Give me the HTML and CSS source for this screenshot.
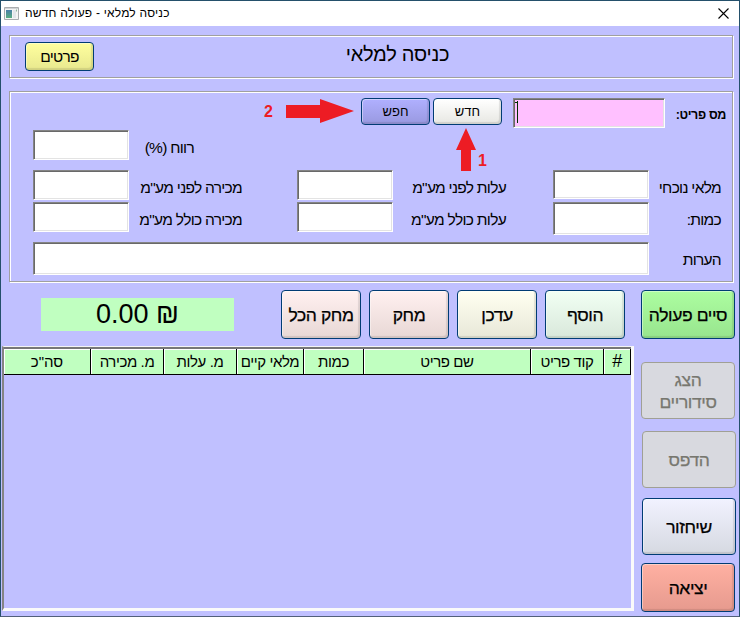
FILE: index.html
```html
<!DOCTYPE html>
<html lang="he" dir="rtl">
<head>
<meta charset="utf-8">
<title>כניסה למלאי - פעולה חדשה</title>
<link rel="stylesheet" href="styles.css">
</head>
<body>
<div class="window">
  <header class="titlebar">
    <svg class="close" width="11" height="11" viewBox="0 0 11 11"><path d="M.5 .5l10 10M10.5 .5l-10 10" stroke="#000" stroke-width="1.1" fill="none"/></svg>
    <span class="caption"><span class="caption-text">כניסה למלאי - פעולה חדשה</span>
      <svg class="app-icon" width="15" height="13" viewBox="0 0 15 13"><defs><linearGradient id="g" x1="0" y1="0" x2="0" y2="1"><stop offset="0" stop-color="#4a7fa8"/><stop offset="1" stop-color="#58ad80"/></linearGradient></defs><path d="M.5 .5h14v12H.5z" fill="#f4f4f4" stroke="#a9acae"/><path d="M1 1h13v1H1z" fill="#d0d2d4"/><path d="M2 3h6v8H2z" fill="url(#g)"/><path d="M9 3h3v8H9z" fill="#e2e6ea"/><path d="M12 2.5h1v2h-1z" fill="#8fb79c"/></svg>
    </span>
  </header>

  <section class="group heading">
    <h1>כניסה למלאי</h1>
    <button class="btn yellow">פרטים</button>
  </section>

  <section class="group form">
    <div class="item-row">
      <label class="item-label">מס פריט:</label>
      <div class="field item-field"><svg width="4" height="24" viewBox="0 0 4 24"><path d="M3 1h1v22H3zM1 2h2v1H1z" fill="#003000"/></svg></div>
      <button class="btn small white">חדש</button>
      <button class="btn small blue">חפש</button>
      <svg class="arrow-right" width="68" height="24" viewBox="0 0 68 24"><path d="M0 6h34V0l34 12-34 12v-5H0z" fill="#ed1c24"/></svg>
      <span class="num two">2</span>
    </div>
    <div class="fields">
      <label class="c7 r1 profit">רווח (%)</label><div class="field c8 r1"></div>
      <label class="c1 r2">מלאי נוכחי</label><div class="field c2 r2 short"></div>
      <label class="c4 r2">עלות לפני מע"מ</label><div class="field c5 r2"></div>
      <label class="c7 r2">מכירה לפני מע"מ</label><div class="field c8 r2"></div>
      <label class="c1 r3">כמות:</label><div class="field c2 r3 tall"></div>
      <label class="c4 r3">עלות כולל מע"מ</label><div class="field c5 r3"></div>
      <label class="c7 r3">מכירה כולל מע"מ</label><div class="field c8 r3"></div>
      <label class="c1 r4">הערות</label><div class="field notes r4"></div>
    </div>
    <div class="pointer">
      <svg width="20" height="43" viewBox="0 0 20 43"><path d="M10 0l10 22h-5v21H5V22H0z" fill="#ed1c24"/></svg>
      <span class="num">1</span>
    </div>
  </section>

  <div class="toolbar">
    <button class="btn green finish">סיים פעולה</button>
    <button class="btn mint">הוסף</button>
    <button class="btn cream">עדכן</button>
    <button class="btn rose">מחק</button>
    <button class="btn rose">מחק הכל</button>
    <div class="total" dir="ltr">0.00 ₪</div>
  </div>

  <main class="lower">
    <aside class="side">
      <button class="btn off b1" disabled>הצג<br>סידוריים</button>
      <button class="btn off b2" disabled>הדפס</button>
      <button class="btn ice b3">שיחזור</button>
      <button class="btn red b4">יציאה</button>
    </aside>
    <div class="list">
      <div class="head">
        <span class="hash">#</span><span>קוד פריט</span><span>שם פריט</span><span>כמות</span><span>מלאי קיים</span><span>מ. עלות</span><span>מ. מכירה</span><span class="sum">סה"כ</span>
      </div>
    </div>
  </main>
</div>
</body>
</html>
```
FILE: styles.css
```css
* { box-sizing: border-box; }
body { margin: 0; font-family: "Liberation Sans", sans-serif; color: #000; }
.window { width: 740px; height: 617px; overflow: hidden; background: #c0c0ff; border: 1px solid #24506b; border-bottom-color: #52607a; }

.titlebar { height: 25px; background: #fff; display: flex; align-items: center; justify-content: space-between; padding: 0 10px 1px 3px; }
.caption { display: flex; align-items: center; gap: 6px; font-size: 12px; letter-spacing: .2px; white-space: nowrap; }
svg { display: block; flex: none; }

.group { width: 724px; margin-right: 6px; border: 1px solid #a0a0a0; box-shadow: 1px 1px 0 #fff, inset 1px 1px 0 #fff; }
.heading { margin-top: 9px; height: 43px; display: grid; grid-template-columns: 1fr 69px; padding: 6px 0 0 15px; }
h1 { margin: 0; font-size: 20px; font-weight: 400; line-height: 24px; letter-spacing: -.25px; text-align: center; padding-right: 31px; }

.btn { font-family: inherit; color: #000; padding: 0; border: 1px solid #003c74; border-radius: 4px; font-size: 17.5px; letter-spacing: -.4px; line-height: 22px; white-space: nowrap; box-shadow: inset 1px 1px 0 rgba(255,255,255,.4), inset -2px -2px 1px rgba(0,0,0,.1); -webkit-text-stroke: .25px; }
.yellow { background: linear-gradient(#ffff9e, #e8e88e); height: 29px; font-size: 15.5px; letter-spacing: -.7px; -webkit-text-stroke: 0; }
.small { width: 69px; height: 27px; font-size: 13px; letter-spacing: 0; -webkit-text-stroke: 0; }
.white { background: linear-gradient(#fff, #e7e7e2); margin-right: 11px; }
.blue { background: linear-gradient(#b0b0ff, #9999e0); margin-right: 3px; }
.green { background: linear-gradient(#acfda0, #98e58e); }
.mint { background: linear-gradient(#f1fff3, #d9e8db); }
.cream { background: linear-gradient(#fffff1, #e8e8d8); }
.rose { background: linear-gradient(#fff0f0, #e8d8d5); }
.ice { background: linear-gradient(#f1f2ff, #d6d9e1); }
.red { background: linear-gradient(#ffb0a2, #e69a8e); }
.off { background: #d8d9df; border-color: #a0a095; color: #77776f; box-shadow: none; }

.form { margin-top: 13px; height: 191px; position: relative; }
.item-row { display: flex; align-items: flex-start; padding: 6px 6px 0 0; height: 38px; }
.item-label { width: 61px; font-size: 12.5px; font-weight: 700; letter-spacing: -.35px; line-height: 34px; white-space: nowrap; }
.field { background: #fff; border: 1px solid; border-color: #848484 #fff #fff #848484; box-shadow: inset 1px 1px 0 #696969, inset -1px -1px 0 #e3e3e3; height: 30px; }
.item-field { width: 152px; background: #ffc0ff; padding: 1px 0 0; direction: ltr; }
.arrow-right { margin: 1px 7px 0 0; }
.num { color: #ed1c24; font-size: 16px; font-weight: 700; }
.two { margin: 5px 13px 0 0; line-height: 18px; }
.pointer { position: absolute; left: 446px; top: 36px; display: flex; direction: ltr; align-items: flex-end; gap: 2px; line-height: 20px; }

.fields { display: grid; grid-template-columns: 72px 96px 47px 113px 96px 55px 113px 96px; grid-template-rows: 40px 32px 40px 33px; padding-right: 11px; }
.fields label { font-size: 15.5px; letter-spacing: -.7px; line-height: 35px; white-space: nowrap; }
.fields .profit { padding-right: 48px; }
.c1 { grid-column: 1; } .c2 { grid-column: 2; } .c4 { grid-column: 4; } .c5 { grid-column: 5; }
.c7 { grid-column: 7; } .c8 { grid-column: 8; }
.r1 { grid-row: 1; } .r2 { grid-row: 2; } .r3 { grid-row: 3; } .r4 { grid-row: 4; }
.short { height: 29px; } .tall { height: 33px; }
.notes { grid-column: 2 / 9; height: 33px; }

.toolbar { display: flex; margin-top: 8px; padding-right: 4px; gap: 8px; height: 56px; }
.toolbar .btn { width: 80px; height: 49px; }
.toolbar .finish { width: 94px; margin-left: 8px; }
.total { width: 193px; height: 33px; margin: 8px 39px 0 0; background: #c0ffc0; font-size: 27px; line-height: 33px; text-align: center; }

.lower { display: flex; justify-content: space-between; }
.side { width: 95px; margin-right: 3px; display: flex; flex-direction: column; padding-top: 16px; }
.side .btn { width: 94px; height: 57px; }
.b1 { margin-right: 1px; } .b2 { margin-top: 12px; } .b3 { margin-top: 10px; }
.side .b4 { margin: 8px 1px 0 0; height: 49px; }
.list { width: 632px; height: 265px; margin-left: 1px; border: solid; border-width: 1px 3px 3px 2px; border-color: #f4f4f4 #fafafa #fafafa #848484; box-shadow: inset 0 2px 0 #777; padding-top: 2px; }
.head { display: grid; grid-template-columns: 27px 73px 167px 60px 67px 73px 73px 87px; height: 25px; }
.head span { background: #c0ffc0; border-right: 1px solid #000; border-bottom: 1px solid #000; box-shadow: inset 1px 1px 0 #fff; text-align: center; font-size: 15px; letter-spacing: -.4px; line-height: 25px; white-space: nowrap; }
.head .hash { font-size: 18px; }
.head .sum { letter-spacing: 0; }
```
